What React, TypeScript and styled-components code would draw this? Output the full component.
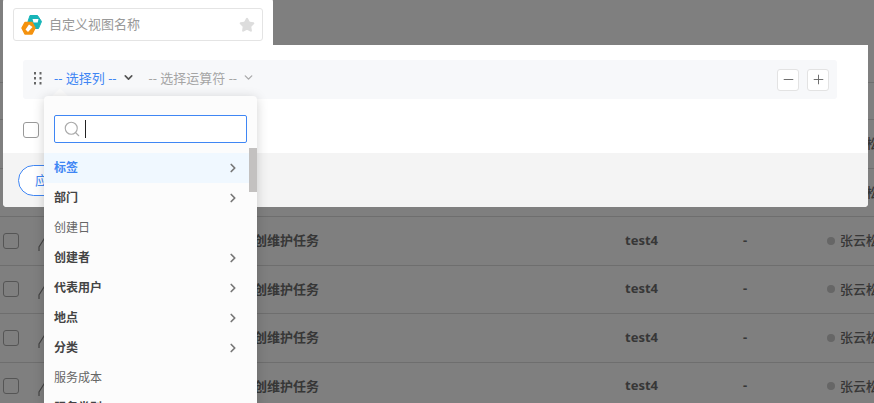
import React from "react";
import styled, { createGlobalStyle } from "styled-components";
import { ChevronDown, ChevronRight, Minus, Plus, Search, Star } from "lucide-react";

const Global = createGlobalStyle`
  html, body { margin: 0; padding: 0; height: 100%; background: #fff; overflow: hidden; }
  body { font-family: "Noto Sans", "Noto Sans CJK SC", sans-serif; }
  * { box-sizing: border-box; }
`;

const Page = styled.div`
  position: relative;
  width: 874px;
  height: 403px;
  overflow: hidden;
`;

const Table = styled.div`
  padding-top: 82px;
`;

const HeadRow = styled.div`
  height: 37px;
  border-top: 1px solid #ddd;
`;

const Row = styled.div`
  height: 48.5px;
  border-top: 1px solid #ddd;
  padding-left: 3px;
  display: grid;
  grid-template-columns: 35px 216px 371px 118px 84px 1fr;
  align-items: center;
  font-size: 13px;
  font-weight: 700;
  color: #6e6e6e;
  white-space: nowrap;
`;

const RowText = styled.span`
  padding-bottom: 2px;
`;

const RowBox = styled.span`
  width: 16px;
  height: 16px;
  border: 1px solid #aaa;
  border-radius: 3px;
  background: #fff;
`;

const Owner = styled.span`
  display: flex;
  align-items: center;
  gap: 5px;
  font-weight: 500;
`;

const Dot = styled.span`
  width: 8px;
  height: 8px;
  border-radius: 50%;
  background: #ccc;
`;

const Dim = styled.div`
  position: absolute;
  inset: 0;
  background: rgba(0, 0, 0, 0.5);
`;

const NameTab = styled.div`
  position: absolute;
  left: 3px;
  top: -4px;
  width: 270px;
  height: 50px;
  padding: 12px 10px 0;
  background: #fff;
  border-radius: 6px 6px 0 0;
`;

const NameField = styled.div`
  height: 33px;
  border: 1px solid #e4e4e4;
  border-radius: 3px;
  display: flex;
  align-items: center;
  padding: 0 7px 0 7px;
  color: #999;
  font-size: 13px;
  gap: 7px;
`;

const NameText = styled.span`
  flex: 1;
  padding-bottom: 2px;
`;

const Modal = styled.div`
  position: absolute;
  left: 3px;
  top: 45px;
  width: 865px;
  height: 162px;
  background: #fff;
  border-radius: 0 0 4px 4px;
  display: flex;
  flex-direction: column;
  overflow: hidden;
`;

const Body = styled.div`
  flex: none;
  height: 108px;
  padding: 15px 31px 0 20px;
`;

const FilterRow = styled.div`
  height: 39px;
  background: #f7f8fa;
  border-radius: 3px;
  display: flex;
  align-items: center;
  padding: 0 8px 0 11px;
  font-size: 13px;
`;

const Grip = styled.svg`
  flex: none;
  margin: 0 12px 3px 0;
`;

const ColumnPick = styled.span`
  color: #3f86f4;
  display: flex;
  align-items: center;
  gap: 5px;
  margin-right: 14px;
  padding-bottom: 5px;
`;

const OperatorPick = styled.span`
  color: #a5a5a5;
  display: flex;
  align-items: center;
  gap: 5px;
  padding-bottom: 5px;
`;

const Spacer = styled.span`
  flex: 1;
`;

const SquareButton = styled.span`
  width: 22px;
  height: 22px;
  margin-left: 8px;
  border: 1px solid #e3e3e3;
  border-radius: 3px;
  background: #fff;
  color: #666;
  display: flex;
  align-items: center;
  justify-content: center;
`;

const AllBox = styled.span`
  display: block;
  width: 16px;
  height: 16px;
  margin-top: 23px;
  border: 1px solid #999;
  border-radius: 3px;
`;

const Footer = styled.div`
  flex: 1;
  min-height: 0;
  background: #f4f4f4;
  padding: 12px 15px 0;
`;

const Apply = styled.span`
  display: flex;
  align-items: center;
  width: 70px;
  height: 31px;
  padding: 0 0 2px 16px;
  border: 1px solid #3f86f4;
  border-radius: 16px;
  background: #fff;
  color: #3f86f4;
  font-size: 13px;
`;

const Caret = styled.div`
  position: absolute;
  left: 53px;
  top: 87px;
  width: 14px;
  height: 14px;
  background: #fcfcfc;
  transform: rotate(45deg) translate(3px, 3px);
`;

const Menu = styled.div`
  position: absolute;
  left: 44px;
  top: 96px;
  width: 213px;
  height: 320px;
  background: #fcfcfc;
  border-radius: 4px 4px 0 0;
  box-shadow: 0 2px 12px rgba(0, 0, 0, 0.18);
  padding-top: 19px;
  overflow: hidden;
`;

const SearchBox = styled.div`
  width: 193px;
  height: 28px;
  margin: 0 0 10px 10px;
  border: 1px solid #3f86f4;
  border-radius: 2px;
  background: #fff;
  display: flex;
  align-items: center;
  padding-left: 8px;
  color: #aaa;
  gap: 4px;
`;

const Cursor = styled.span`
  width: 1px;
  height: 18px;
  background: #222;
`;

const Item = styled.div<{ $active?: boolean; $group?: boolean }>`
  height: 30px;
  padding: 0 17px 0 10px;
  display: flex;
  align-items: center;
  justify-content: space-between;
  font-size: 12px;
  font-weight: ${(p) => (p.$group ? 700 : 400)};
  color: ${(p) => (p.$active ? "#3f86f4" : p.$group ? "#444" : "#666")};
  background: ${(p) => (p.$active ? "#f0f8ff" : "transparent")};
`;

const ItemLabel = styled.span`
  padding-bottom: 2px;
`;

const Arrow = styled(ChevronRight)`
  color: #777;
`;

const Thumb = styled.div`
  position: absolute;
  right: 0;
  top: 52px;
  width: 8px;
  height: 44px;
  background: #c3c1c0;
`;

const Logo = () => (
  <svg width="21" height="21" viewBox="0 0 21 21" strokeLinejoin="round">
    <path d="M9 1.500h7.500l4 6-3 7h-7l-3.500-7z" fill="#18b5b8" stroke="#18b5b8" />
    <path d="M11.500 5h6l-.8 3.500h-4.200z" fill="#fff" />
    <path d="M4 8.500h7l3 5.500-3 6H4l-3-6z" fill="#f4920f" stroke="#f4920f" strokeWidth="1.500" />
    <path d="M8 10.500l3.500 2.500-4.500 5-2.500-2.500z" fill="#fff" />
  </svg>
);

const House = () => (
  <svg width="14" height="20" viewBox="0 0 14 20" fill="none" stroke="#888" strokeWidth="1.200">
    <path d="M1 20v-4L6 8l3-4" />
  </svg>
);

const dots = [0, 1, 2].flatMap((r) => [0, 1].map((c) => [c, r]));
const items: [string, boolean][] = [
  ["标签", true],
  ["部门", true],
  ["创建日", false],
  ["创建者", true],
  ["代表用户", true],
  ["地点", true],
  ["分类", true],
  ["服务成本", false],
  ["服务类别", true],
];

export default function App() {
  return (
    <Page>
      <Global />
      <Table>
        <HeadRow />
        {[0, 1, 2, 3, 4, 5].map((i) => (
          <Row key={i}>
            <RowBox />
            <House />
            <RowText>创维护任务</RowText>
            <RowText>test4</RowText>
            <RowText>-</RowText>
            <Owner>
              <Dot />
              <RowText>张云松</RowText>
            </Owner>
          </Row>
        ))}
      </Table>
      <Dim />
      <NameTab>
        <NameField>
          <Logo />
          <NameText>自定义视图名称</NameText>
          <Star size={16} fill="#ddd" color="#ddd" />
        </NameField>
      </NameTab>
      <Modal>
        <Body>
          <FilterRow>
            <Grip width="8" height="13" viewBox="0 0 8 13">
              {dots.map(([c, r]) => (
                <rect key={`${c}${r}`} x={c * 5.5} y={r * 5} width="2" height="2.500" fill="#666" />
              ))}
            </Grip>
            <ColumnPick>
              -- 选择列 --
              <ChevronDown size={13} color="#555" strokeWidth={3} />
            </ColumnPick>
            <OperatorPick>
              -- 选择运算符 --
              <ChevronDown size={13} color="#aaa" strokeWidth={2.500} />
            </OperatorPick>
            <Spacer />
            <SquareButton>
              <Minus size={15} strokeWidth={1.500} />
            </SquareButton>
            <SquareButton>
              <Plus size={15} strokeWidth={1.500} />
            </SquareButton>
          </FilterRow>
          <AllBox />
        </Body>
        <Footer>
          <Apply>应用</Apply>
        </Footer>
      </Modal>
      <Caret />
      <Menu>
        <SearchBox>
          <Search size={18} strokeWidth={1.500} />
          <Cursor />
        </SearchBox>
        {items.map(([label, group], i) => (
          <Item key={label} $active={i === 0} $group={group}>
            <ItemLabel>{label}</ItemLabel>
            {group && <Arrow size={14} strokeWidth={3} />}
          </Item>
        ))}
        <Thumb />
      </Menu>
    </Page>
  );
}
